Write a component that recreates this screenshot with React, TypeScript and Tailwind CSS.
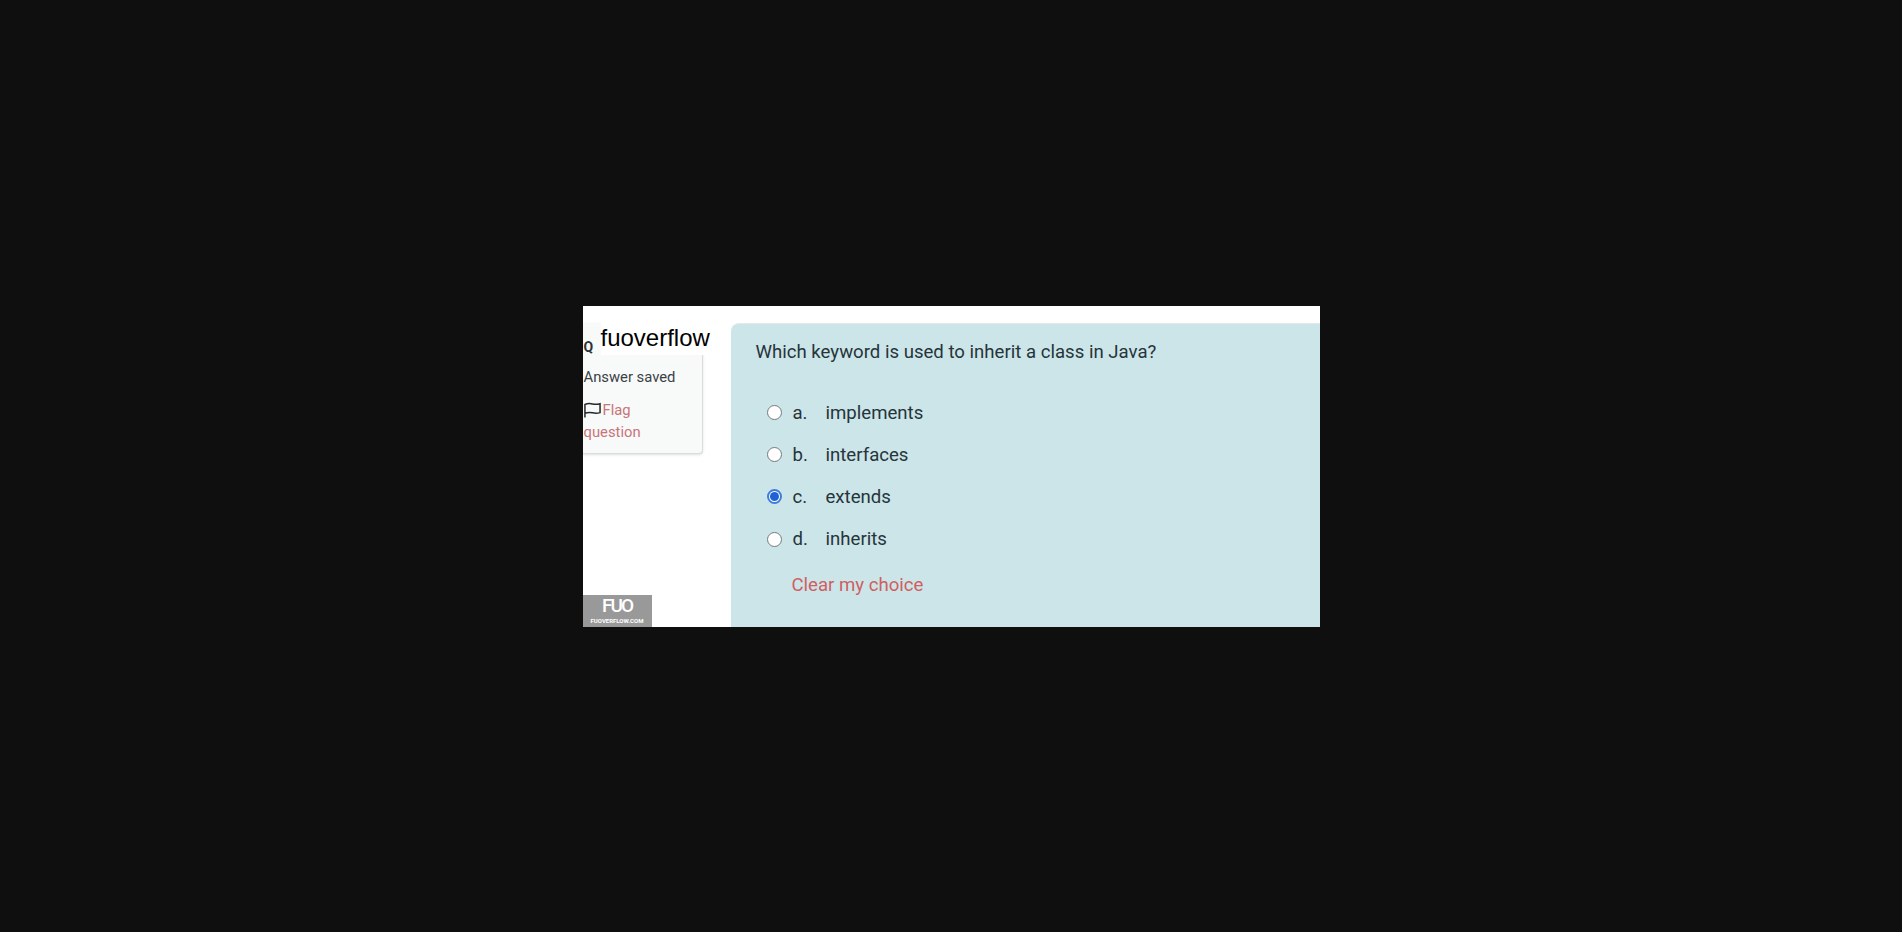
const options = [
  { letter: "a.", text: "implements" },
  { letter: "b.", text: "interfaces" },
  { letter: "c.", text: "extends", checked: true },
  { letter: "d.", text: "inherits" },
];

function Radio({ checked }: { checked?: boolean }) {
  if (checked) {
    return (
      <span className="flex h-[15px] w-[15px] items-center justify-center rounded-full border-2 border-[#3f7ddc] bg-white">
        <span className="h-[9px] w-[9px] rounded-full bg-[#1f62d6]" />
      </span>
    );
  }
  return <span className="h-[15px] w-[15px] rounded-full border border-[#76797b] bg-white" />;
}

function QuizInfo() {
  return (
    <div className="flex h-[131px] w-[120px] flex-col rounded-br-sm border-r border-b border-[#dcdcdc] bg-[#f8f9f9] pl-[1px] text-[14.8px] text-[#3a4246] shadow-sm">
      <div className="h-[44px] pt-[16px] text-[14px] leading-4 font-bold text-[#2b3338]">Q</div>
      <div className="leading-5">Answer saved</div>
      <div className="mt-[12px] w-[84px] leading-[22px] text-[#c8747a]">
        <svg viewBox="0 0 18 16" className="inline-block h-[16px] w-[17px] align-[-3px] text-[#23292d]" fill="none" stroke="currentColor" strokeWidth="1.6">
          <path d="M1 16V2.2C4 .9 6 .9 9 1.6s5 .7 8-.2v9.4c-3 .9-5 .9-8 .2s-5-.7-8 .4" />
        </svg>
        <span className="ml-[2px]">Flag question</span>
      </div>
    </div>
  );
}

export default function App() {
  return (
    <div className="flex h-screen items-center justify-center bg-[#0f0f0f] font-['Roboto',sans-serif]">
      <div className="relative flex h-[321px] w-[737px] overflow-hidden bg-white pt-[17px]">
        <div className="w-[148px] shrink-0">
          <QuizInfo />
        </div>
        <div className="flex-1 rounded-tl-lg border-t border-[#e3e9e9] bg-[#cce5e8]">
          <p className="ml-[25px] mt-[17px] text-[18.6px] leading-[22px] text-[#26343b]">
            Which keyword is used to inherit a class in Java?
          </p>
          <ul className="ml-[36px] mt-[39px] flex flex-col gap-[20.2px] text-[18.6px] leading-[22px] text-[#26343b]">
            {options.map((o) => (
              <li key={o.letter} className="flex items-center">
                <Radio checked={o.checked} />
                <span className="ml-[11px] w-[33px]">{o.letter}</span>
                <span>{o.text}</span>
              </li>
            ))}
          </ul>
          <div className="ml-[61px] mt-[24px] text-[18.6px] leading-[22px] text-[#cf5f63]">Clear my choice</div>
        </div>
        <div className="absolute left-[18px] top-[14px] bg-white pr-[4px] font-['Liberation_Sans',sans-serif] text-[24px] leading-[35px] text-black">
          fuoverflow
        </div>
        <div className="absolute bottom-0 left-0 flex h-[32px] w-[69px] flex-col items-center bg-[#999999] text-white">
          <span className="mt-[1px] text-[19px] leading-[20px] font-medium tracking-[-2px]">FUO</span>
          <span className="text-[6px] leading-[9px] font-bold">FUOVERFLOW.COM</span>
        </div>
      </div>
    </div>
  );
}
